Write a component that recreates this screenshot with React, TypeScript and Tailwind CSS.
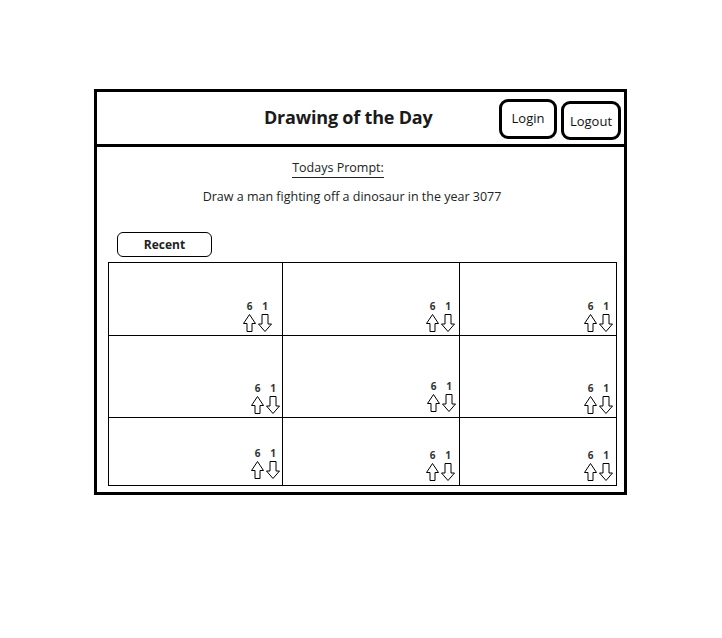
import React from "react";

const UpArrow = () => (
  <svg width="13" height="18" viewBox="0 0 13 18" className="block">
    <polygon points="6.5,0.5 12.5,9.5 9,9.5 9,17.5 4,17.5 4,9.5 0.5,9.5" fill="white" stroke="black" strokeWidth="1" />
  </svg>
);

const DownArrow = () => (
  <svg width="14" height="18" viewBox="0 0 14 18" className="block">
    <polygon points="4,0.5 10,0.5 10,10 13.5,10 7,17.5 0.5,10 4,10" fill="white" stroke="black" strokeWidth="1" />
  </svg>
);

const Votes = () => (
  <div className="flex flex-col">
    <div className="flex gap-[2px] text-[10px] leading-[12px] font-bold text-[#333]">
      <span className="w-[13px] text-center">6</span>
      <span className="w-[14px] text-center">1</span>
    </div>
    <div className="mt-[2px] flex gap-[2px]">
      <UpArrow />
      <DownArrow />
    </div>
  </div>
);

const cells = [
  "pr-[10px] pb-[3px] border-r",
  "pr-[4px] pb-[3px] border-r",
  "pr-[3px] pb-[3px]",
  "pr-[2px] pb-[3px] border-r",
  "pr-[3px] pb-[5px] border-r",
  "pr-[3px] pb-[3px]",
  "pr-[2px] pb-[6px] border-r",
  "pr-[4px] pb-[4px] border-r",
  "pr-[3px] pb-[4px]",
];

export default function App() {
  return (
    <div className="w-[722px] h-[638px] bg-white pt-[89px] pl-[94px]" style={{ fontFamily: '"Open Sans", "Noto Sans", sans-serif' }}>
      <div className="w-[533px] h-[406px] border-[3px] border-black flex flex-col">
        <div className="h-[55px] border-b-[3px] border-black flex items-start">
          <div className="pl-[167px] pt-[12px] text-[18px] font-bold leading-[26px] text-[#1a1a1a] tracking-[-0.2px]">
            Drawing of the Day
          </div>
          <div className="ml-auto mr-[3px] flex gap-[4px]">
            <div className="mt-[7px] w-[58px] h-[40px] border-[3px] border-black rounded-[9px] flex items-center justify-center text-[13px] text-[#111]">
              Login
            </div>
            <div className="mt-[9px] w-[60px] h-[39px] border-[3px] border-black rounded-[9px] flex items-center justify-center pt-[2px] text-[13px] text-[#111]">
              Logout
            </div>
          </div>
        </div>
        <div className="flex flex-col">
          <div className="mt-[12px] flex justify-center pr-[45px]">
            <span className="text-[12.5px] leading-[18px] text-[#222] border-b border-[#222]">Todays Prompt:</span>
          </div>
          <div className="mt-[10px] text-center pr-[17px] text-[12.5px] leading-[18px] text-[#222]">
            Draw a man fighting off a dinosaur in the year 3077
          </div>
          <div className="mt-[26px] ml-[20px] w-[95px] h-[25px] border border-black rounded-[6px] flex items-center justify-center text-[12px] font-bold text-[#222]">
            Recent
          </div>
          <div className="mt-[5px] ml-[11px] w-[509px] h-[224px] border border-black grid grid-cols-[174px_177px_156px] grid-rows-[73px_82px_67px]">
            {cells.map((c, i) => (
              <div key={i} className={`flex items-end justify-end border-black ${i < 6 ? "border-b" : ""} ${c}`}>
                <Votes />
              </div>
            ))}
          </div>
        </div>
      </div>
    </div>
  );
}
